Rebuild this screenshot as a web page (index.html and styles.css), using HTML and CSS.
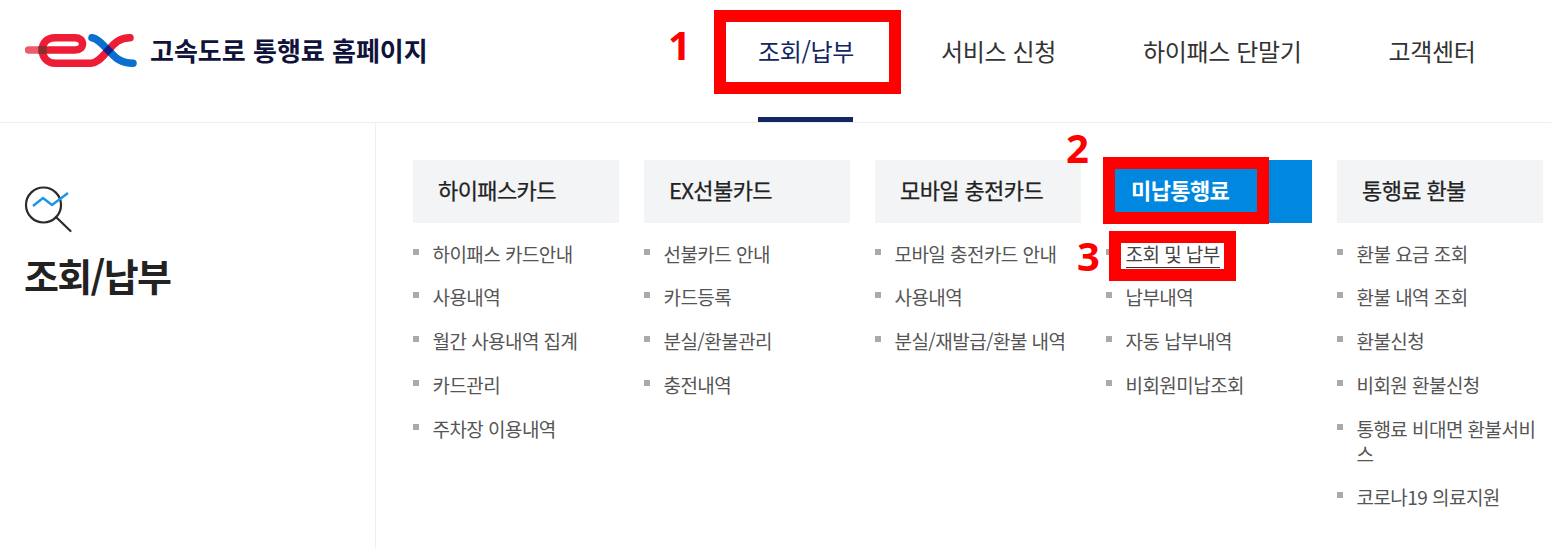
FILE: index.html
```html
<!DOCTYPE html>
<html lang="ko">
<head>
<meta charset="utf-8">
<title>고속도로 통행료 홈페이지</title>
<link rel="stylesheet" href="styles.css">
</head>
<body>
<header class="header">
  <a class="brand">
    <svg class="logo" width="112" height="36" viewBox="0 0 112 36">
      <path d="M3.500 17H14" fill="none" stroke="#ee5a6c" stroke-width="7.500" stroke-linecap="round"/>
      <path d="M21.500 17H50C55 17 57.500 14 57.500 11C57.500 7 54.500 4.700 50 4.700H30C22 4.700 17.300 10 17.300 17C17.300 25 23 30.300 30 30.300H66C73 30.300 78 22.500 83.300 17.300C89 11 94 4.700 105 4.700" fill="none" stroke="#ee1c34" stroke-width="7.500" stroke-linecap="round"/>
      <path d="M67 4.700C74 6 78 12 83.300 17.300C89 23 94 30.300 108 30.300" fill="none" stroke="#0a6fce" stroke-width="7.500" stroke-linecap="round"/>
      <rect x="13.400" y="13.200" width="8.200" height="7.600" fill="#86302f"/>
      <path d="M83.300 12L88.600 17.300L83.300 22.600L78 17.300Z" fill="#151e8c"/>
    </svg>
    <span class="brand-name">고속도로 통행료 홈페이지</span>
  </a>
  <nav class="nav">
    <a class="nav-item is-active">조회/납부</a>
    <a class="nav-item">서비스 신청</a>
    <a class="nav-item">하이패스 단말기</a>
    <a class="nav-item">고객센터</a>
  </nav>
</header>
<main class="main">
  <aside class="side">
    <svg class="side-icon" width="50" height="48" viewBox="0 0 50 48">
      <circle cx="19.500" cy="19" r="17.500" fill="none" stroke="#2b2b2b" stroke-width="2.200"/>
      <path d="M32 31L46.500 45" fill="none" stroke="#2b2b2b" stroke-width="2.200" stroke-linecap="round"/>
      <path d="M9 20L19 12L28 19L44 7" fill="none" stroke="#1b95e6" stroke-width="2.500"/>
    </svg>
    <h1 class="side-title">조회/납부</h1>
  </aside>
  <section class="cols">
    <div class="col">
      <h2 class="col-head">하이패스카드</h2>
      <ul class="list">
        <li>하이패스 카드안내</li><li>사용내역</li><li>월간 사용내역 집계</li><li>카드관리</li><li>주차장 이용내역</li>
      </ul>
    </div>
    <div class="col">
      <h2 class="col-head">EX선불카드</h2>
      <ul class="list">
        <li>선불카드 안내</li><li>카드등록</li><li>분실/환불관리</li><li>충전내역</li>
      </ul>
    </div>
    <div class="col">
      <h2 class="col-head">모바일 충전카드</h2>
      <ul class="list">
        <li>모바일 충전카드 안내</li><li>사용내역</li><li>분실/재발급/환불 내역</li>
      </ul>
    </div>
    <div class="col">
      <h2 class="col-head is-current">미납통행료</h2>
      <ul class="list">
        <li class="is-selected"><span class="selected-text">조회 및 납부</span></li><li>납부내역</li><li>자동 납부내역</li><li>비회원미납조회</li>
      </ul>
    </div>
    <div class="col">
      <h2 class="col-head">통행료 환불</h2>
      <ul class="list">
        <li>환불 요금 조회</li><li>환불 내역 조회</li><li>환불신청</li><li>비회원 환불신청</li><li>통행료 비대면 환불서비스</li><li>코로나19 의료지원</li>
      </ul>
    </div>
  </section>
</main>
<div class="mark box-1"></div>
<div class="mark box-2"></div>
<div class="mark box-3"></div>
<span class="num num-1">1</span>
<span class="num num-2">2</span>
<span class="num num-3">3</span>
</body>
</html>
```
FILE: styles.css
```css
* { box-sizing: border-box; }
html, body { margin: 0; padding: 0; }
body {
  position: relative;
  width: 1551px;
  height: 549px;
  overflow: hidden;
  background: #fff;
  color: #222;
  font-family: "Noto Sans CJK KR", "Noto Sans", sans-serif;
}
.header {
  display: flex;
  height: 123px;
  border-bottom: 1px solid #eee;
}
.brand {
  display: flex;
  align-items: center;
  width: 640px;
  padding: 0 0 21px 25px;
  gap: 13px;
}
.logo { flex: none; }
.brand-name {
  margin-bottom: 2px;
  font-size: 26px;
  font-weight: 700;
  letter-spacing: 0;
  color: #10133a;
  white-space: nowrap;
}
.nav {
  display: flex;
  padding-left: 118px;
  gap: 87px;
}
.nav-item {
  position: relative;
  height: 122px;
  padding-top: 33px;
  font-size: 24px;
  line-height: 36px;
  letter-spacing: -0.35px;
  color: #333;
  white-space: nowrap;
}
.nav-item.is-active { color: #12265f; }
.nav-item.is-active::after {
  content: "";
  position: absolute;
  left: 0;
  right: 1px;
  bottom: 0;
  height: 5px;
  background: #12265f;
}
.main { display: flex; height: 426px; }
.side {
  width: 376px;
  padding: 63px 0 0 24px;
  border-right: 1px solid #eee;
}
.side-icon { display: block; }
.side-title {
  margin: 13px 0 0;
  font-size: 38px;
  line-height: 56px;
  font-weight: 700;
  letter-spacing: -1.7px;
  color: #222;
}
.cols {
  display: flex;
  gap: 25px;
  padding: 37px 0 0 37px;
}
.col { width: 206px; }
.col-head {
  margin: 0;
  height: 63px;
  padding-left: 25px;
  background: #f3f4f6;
  font-size: 22px;
  line-height: 58px;
  font-weight: 400;
  -webkit-text-stroke: 0.25px #222;
  letter-spacing: -0.6px;
  color: #222;
}
.col-head.is-current {
  background: #0088e0;
  color: #fff;
  font-weight: 700;
  -webkit-text-stroke: 0;
}
.list { list-style: none; margin: 17.500px 0 0; padding: 0; }
.list li {
  position: relative;
  padding: 0 0 0 19.500px;
  margin-bottom: 18.800px;
  font-size: 19px;
  line-height: 25px;
  letter-spacing: -0.55px;
  color: #555;
}
.list li::before {
  content: "";
  position: absolute;
  left: 0;
  top: 8px;
  width: 6px;
  height: 6px;
  background: #aaa;
}
.list li.is-selected { color: #444; }
.selected-text { border-bottom: 1px solid #333; }
.mark { position: absolute; border: 12px solid #f00; }
.box-1 { left: 714px; top: 10px; width: 187px; height: 84px; }
.box-2 { left: 1103px; top: 157px; width: 166px; height: 67px; }
.box-3 { left: 1109px; top: 231px; width: 127px; height: 50px; }
.num {
  position: absolute;
  font-family: "Noto Sans", sans-serif;
  font-weight: 700;
  font-size: 40px;
  line-height: 44px;
  color: #f00;
}
.num-1 { left: 668px; top: 23px; }
.num-2 { left: 1066px; top: 126px; }
.num-3 { left: 1077px; top: 234px; }
```
